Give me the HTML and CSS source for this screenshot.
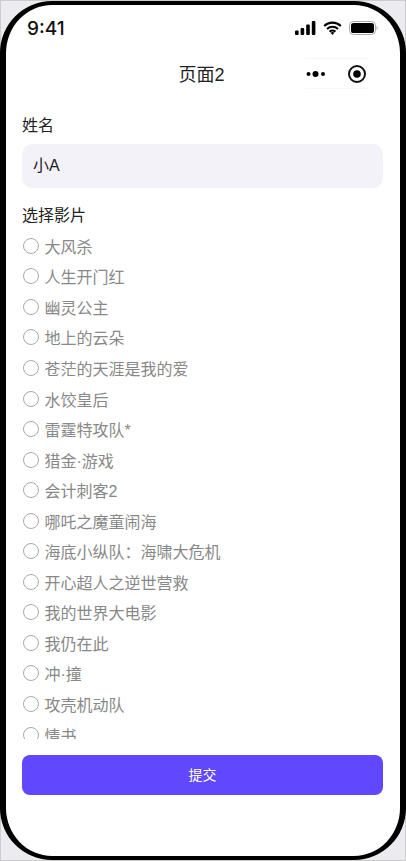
FILE: index.html
```html
<!DOCTYPE html>
<html lang="zh-CN">
<head>
    <meta charset="UTF-8">
    <meta name="viewport" content="width=device-width, initial-scale=1.0">
    <title>页面2</title>
    <link rel="stylesheet" href="styles.css">
</head>
<body>
    <div class="phone">
        <div class="status-bar">
            <span class="time">9:41</span>
            <div class="status-icons">
                <svg width="21" height="14" viewBox="0 0 21 14"><rect x="0" y="9.5" width="3.6" height="4.5" rx="1"/><rect x="5.6" y="7" width="3.6" height="7" rx="1"/><rect x="11.2" y="3.5" width="3.6" height="10.5" rx="1"/><rect x="16.8" y="0" width="3.6" height="14" rx="1"/></svg>
                <svg width="19" height="14" viewBox="0 0 19 14"><path d="M1.2 5a12 12 0 0 1 16.6 0M4 8a8 8 0 0 1 11 0M6.6 10.8a4.2 4.2 0 0 1 5.8 0" fill="none" stroke="#000" stroke-width="2.1"/><path d="M9.5 14l-1.9-2.2a2.9 2.9 0 0 1 3.8 0z"/></svg>
                <svg width="29" height="14" viewBox="0 0 29 14"><rect x="0.5" y="0.5" width="26" height="13" rx="4" fill="none" stroke="#aaa"/><rect x="2" y="2" width="23" height="10" rx="2.6"/><path d="M27.5 5v4a2 2 0 0 0 1.2-2a2 2 0 0 0-1.2-2z" fill="#aaa"/></svg>
            </div>
        </div>
        <div class="nav-bar">
            <span class="nav-title">页面2</span>
            <div class="capsule">
                <svg width="20" height="8" viewBox="0 0 20 8"><circle cx="2.5" cy="4" r="2"/><circle cx="9.5" cy="4" r="3"/><circle cx="17" cy="4" r="2"/></svg>
                <svg width="20" height="20" viewBox="0 0 20 20"><circle cx="10" cy="10" r="8" fill="none" stroke="#111" stroke-width="2"/><circle cx="10" cy="10" r="3.8"/></svg>
            </div>
        </div>
        <div class="form-scroll">
            <div class="field-label">姓名</div>
            <div class="name-input">小A</div>
            <div class="field-label movie-label">选择影片</div>
            <ul class="movie-list">
                <li><span class="radio"></span>大风杀</li>
                <li><span class="radio"></span>人生开门红</li>
                <li><span class="radio"></span>幽灵公主</li>
                <li><span class="radio"></span>地上的云朵</li>
                <li><span class="radio"></span>苍茫的天涯是我的爱</li>
                <li><span class="radio"></span>水饺皇后</li>
                <li><span class="radio"></span>雷霆特攻队*</li>
                <li><span class="radio"></span>猎金·游戏</li>
                <li><span class="radio"></span>会计刺客2</li>
                <li><span class="radio"></span>哪吒之魔童闹海</li>
                <li><span class="radio"></span>海底小纵队：海啸大危机</li>
                <li><span class="radio"></span>开心超人之逆世营救</li>
                <li><span class="radio"></span>我的世界大电影</li>
                <li><span class="radio"></span>我仍在此</li>
                <li><span class="radio"></span>冲·撞</li>
                <li><span class="radio"></span>攻壳机动队</li>
                <li><span class="radio"></span>情书</li>
            </ul>
        </div>
        <div class="submit-bar">
            <div class="submit-btn">提交</div>
        </div>
    </div>
</body>
</html>
```

FILE: styles.css
```css
html, body {
  margin: 0;
  padding: 0;
  height: 100%;
}

body {
  background-color: #ececf0;
  box-shadow: inset 0 0 0 1px #ccc;
  font-family: "Liberation Sans", "Noto Sans CJK SC", sans-serif;
  box-sizing: border-box;
  padding-top: 1px;
  overflow: hidden;
}

.phone {
  box-sizing: border-box;
  height: 859px;
  width: 406px;
  background-color: #fff;
  border: 6px solid #000;
  border-top-width: 4px;
  border-bottom-width: 4px;
  border-radius: 52px;
  display: flex;
  flex-direction: column;
  overflow: hidden;
}

/* Status bar */
.status-bar {
  height: 46px;
  flex: none;
  display: flex;
  justify-content: space-between;
  align-items: center;
  padding: 0 22px 0 21px;
}

.time {
  font-family: Inter, sans-serif;
  font-size: 19px;
  font-weight: 500;
  color: #111;
}

.status-icons {
  display: flex;
  align-items: center;
  gap: 7px;
}

/* Nav bar */
.nav-bar {
  height: 44px;
  flex: none;
  position: relative;
  display: flex;
  justify-content: center;
  align-items: center;
  padding-right: 3px;
}

.nav-title {
  font-size: 18px;
  color: #222;
}

.capsule {
  position: absolute;
  right: 31px;
  top: 7px;
  width: 64px;
  height: 31px;
  display: flex;
  justify-content: space-between;
  align-items: center;
  padding: 0 2px 0 1px;
  box-sizing: border-box;
  border-top: 1px solid #f7f7f7;
  border-bottom: 1px solid #f7f7f7;
}

/* Form */
.form-scroll {
  height: 644px;
  flex: none;
  overflow: hidden;
  padding: 0 17px 0 16px;
  box-sizing: border-box;
}

.field-label {
  font-size: 16px;
  line-height: 22px;
  color: #222;
  padding-top: 20px;
}

.name-input {
  margin-top: 7px;
  height: 44px;
  line-height: 44px;
  background-color: #f2f2f8;
  border-radius: 10px;
  padding-left: 11px;
  font-size: 16px;
  color: #222;
}

.movie-label {
  padding-top: 17px;
}

.movie-list {
  list-style: none;
  margin: 3.5px 0 0 0;
  padding: 0;
}

.movie-list li {
  height: 30.56px;
  display: flex;
  align-items: center;
  gap: 5.5px;
  font-size: 16px;
  color: #888;
}

.radio {
  box-sizing: border-box;
  width: 16px;
  height: 16px;
  border: 1px solid #aaa;
  border-radius: 50%;
  margin-left: 1px;
}

/* Submit */
.submit-bar {
  flex: 1;
  padding: 16px 17px 0 16px;
}

.submit-btn {
  height: 40px;
  line-height: 40px;
  background-color: #6148ff;
  border-radius: 8px;
  color: #fff;
  text-align: center;
  font-size: 14px;
}
```
